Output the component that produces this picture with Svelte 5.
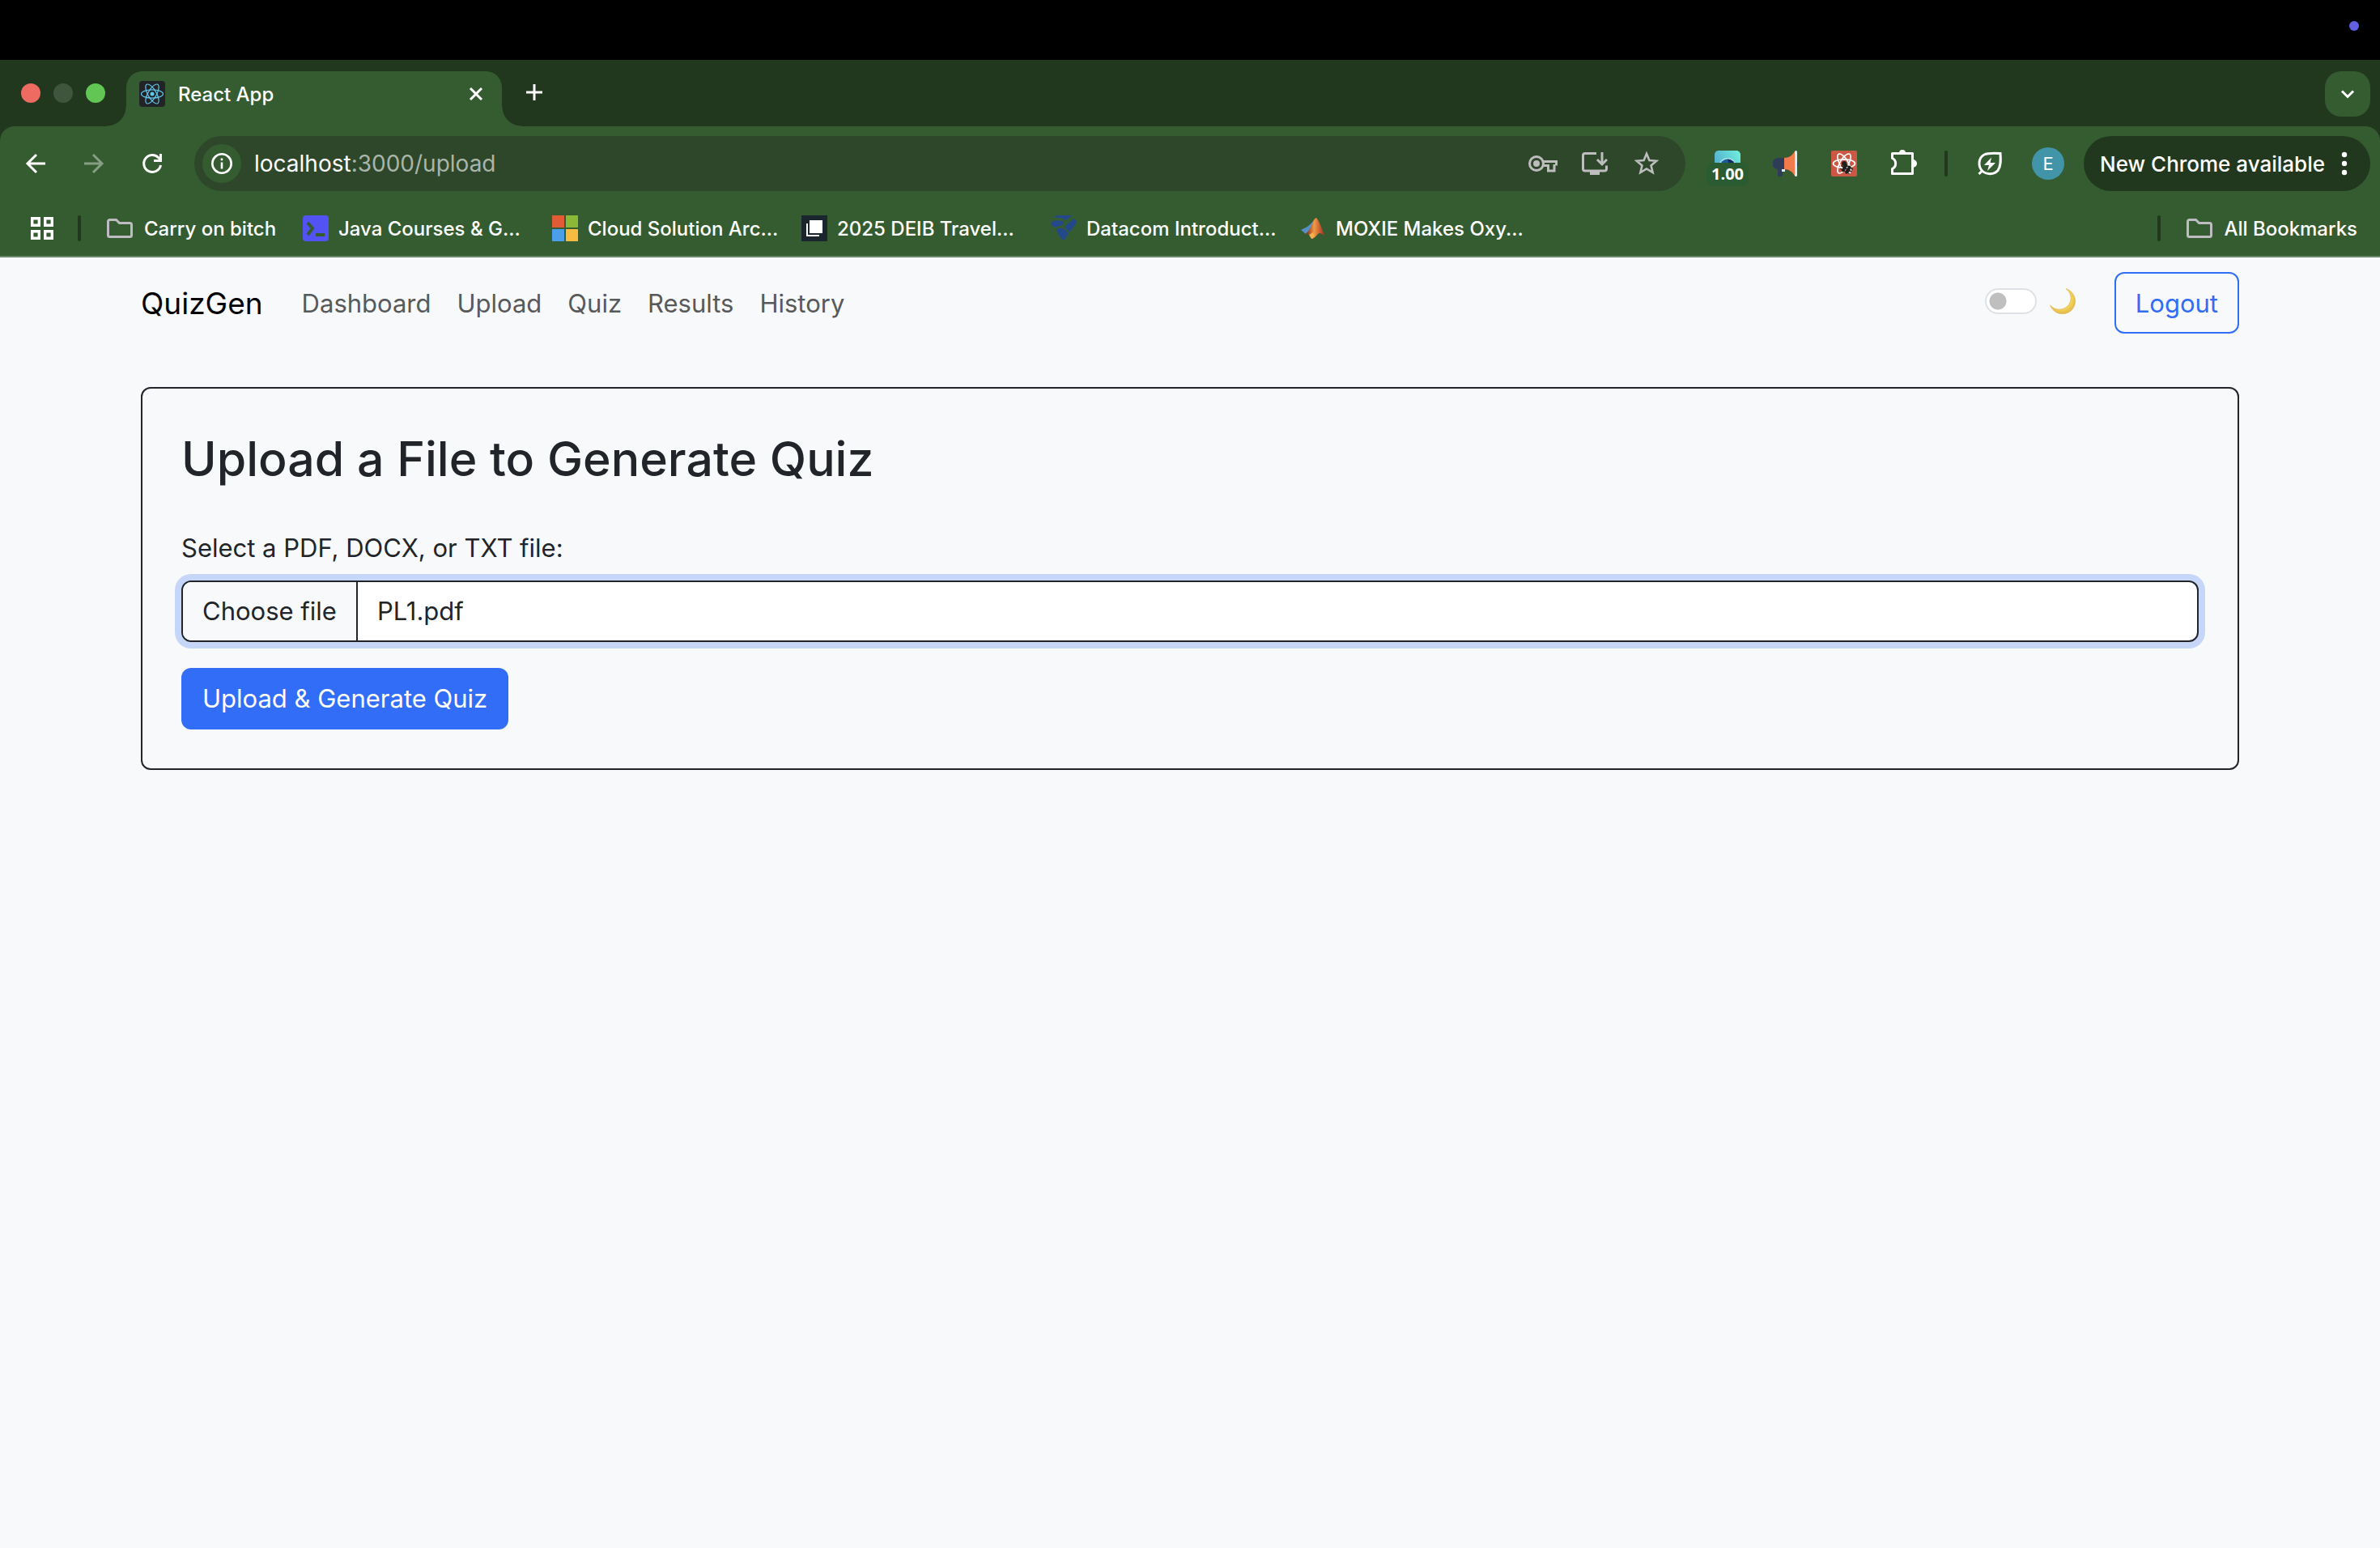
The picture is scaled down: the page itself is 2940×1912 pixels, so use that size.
<script>
  let url = { host: 'localhost', rest: ':3000/upload' };
  let fileName = 'PL1.pdf';
  let dark = false;

  const navLinks = ['Dashboard', 'Upload', 'Quiz', 'Results', 'History'];
  const bookmarks = [
    { icon: 'java', text: 'Java Courses & G...' },
    { icon: 'ms', text: 'Cloud Solution Arc...' },
    { icon: 'deib', text: '2025 DEIB Travel...' },
    { icon: 'datacom', text: 'Datacom Introduct...' },
    { icon: 'moxie', text: 'MOXIE Makes Oxy...' }
  ];

  function pickFile(event) {
    const file = event.currentTarget.files[0];
    if (file) fileName = file.name;
  }
</script>

<div class="screen">
  <div class="menubar"><span class="indicator"></span></div>

  <header class="chrome">
    <div class="tabstrip">
      <div class="lights">
        <span class="light red"></span>
        <span class="light dim"></span>
        <span class="light green"></span>
      </div>
      <div class="tab">
        <svg width="32" height="32" viewBox="0 0 32 32">
          <rect width="32" height="32" rx="4" fill="#222326" />
          <g fill="none" stroke="#61c7ea" stroke-width="1.2">
            <ellipse cx="16" cy="16" rx="13.5" ry="5.2" />
            <ellipse cx="16" cy="16" rx="13.5" ry="5.2" transform="rotate(60 16 16)" />
            <ellipse cx="16" cy="16" rx="13.5" ry="5.2" transform="rotate(120 16 16)" />
          </g>
          <circle cx="16" cy="16" r="2.5" fill="#61c7ea" />
        </svg>
        <span class="tab-title">React App</span>
        <button class="tab-close" aria-label="Close tab">
          <svg width="32" height="32" viewBox="0 0 32 32" fill="none" stroke="#fff" stroke-width="3"><path d="M9 9L23 23M23 9L9 23" /></svg>
        </button>
      </div>
      <button class="icon-btn new-tab" aria-label="New tab">
        <svg width="32" height="32" viewBox="0 0 32 32" fill="none" stroke="#fff" stroke-width="3"><path d="M16 4V24M6 14H26" /></svg>
      </button>
      <button class="icon-btn tab-search" aria-label="Search tabs">
        <svg width="32" height="32" viewBox="0 0 32 32" fill="none" stroke="#fff" stroke-width="3"><path d="M9 12.500L16 19.500L23 12.500" /></svg>
      </button>
    </div>

    <div class="toolbar">
      <div class="group">
        <button class="icon-btn" aria-label="Back">
          <svg width="32" height="32" viewBox="0 0 32 32" fill="none" stroke="#fff" stroke-width="3"><path d="M28 16H6M17 5L6 16L17 27" /></svg>
        </button>
        <button class="icon-btn" aria-label="Forward" disabled>
          <svg width="32" height="32" viewBox="0 0 32 32" fill="none" stroke="#869e83" stroke-width="3"><path d="M4 16H26M15 5L26 16L15 27" /></svg>
        </button>
        <button class="icon-btn" aria-label="Reload">
          <svg width="32" height="32" viewBox="0 0 32 32" fill="none" stroke="#fff" stroke-width="3"><path d="M26.500 18A10.500 10.500 0 1 1 24 9L26.500 11.500M26.500 4V12.500H18" /></svg>
        </button>
      </div>

      <div class="omnibox">
        <button class="site-info" aria-label="View site information">
          <svg width="28" height="28" viewBox="0 0 28 28" fill="none" stroke="#fff" stroke-width="2.600"><circle cx="14" cy="14" r="11.700" /><path d="M14 12.500V20.500M14 7.500V10.200" /></svg>
        </button>
        <div class="url">{url.host}<span>{url.rest}</span></div>
        <button class="omni-btn" aria-label="Passwords">
          <svg width="36" height="32" viewBox="0 0 36 32" fill="none" stroke="#bcbdbc" stroke-width="3"><path d="M18.500 13.500H34.500V18.500M18.500 18.500H24.500V25H32V17" /><circle cx="10" cy="16" r="8.500" /><circle cx="10" cy="16" r="4" fill="#bcbdbc" stroke="none" /></svg>
        </button>
        <button class="omni-btn" aria-label="Install app">
          <svg width="32" height="32" viewBox="0 0 32 32" fill="none" stroke="#bcbdbc" stroke-width="3"><path d="M18 3.500H4a2.500 2.500 0 0 0-2.500 2.500V22.500a2.500 2.500 0 0 0 2.500 2.500H28a2.500 2.500 0 0 0 2.500-2.500V18.500M25 2V16M19 11L25 17L31 11" /><path d="M10 25H22V30H10Z" fill="#bcbdbc" stroke="none" /></svg>
        </button>
        <button class="omni-btn" aria-label="Bookmark this page">
          <svg width="32" height="32" viewBox="0 0 32 32" fill="none" stroke="#bcbdbc" stroke-width="2.600"><path d="M16 3.800L19.400 12L28.200 12.700L21.500 18.400L23.600 27L16 22.400L8.400 27L10.500 18.400L3.800 12.700L12.600 12Z" /></svg>
        </button>
      </div>

      <div class="group">
        <button class="icon-btn speed" aria-label="Video speed">
          <svg width="32" height="32" viewBox="0 0 32 32">
            <defs><linearGradient id="sky" x1="0" y1="0.500" x2="1" y2="0"><stop offset="0" stop-color="#55aed0" /><stop offset="1" stop-color="#6ff0dc" /></linearGradient></defs>
            <rect width="32" height="32" rx="5" fill="url(#sky)" />
            <circle cx="16" cy="20" r="11" fill="#a5e3e8" /><circle cx="16" cy="20" r="9.500" fill="#1d5b9c" /><path d="M16 10.500a9.500 9.500 0 0 1 9.500 9.500h-7z" fill="#162b62" />
          </svg>
          <span class="badge">1.00</span>
        </button>
        <button class="icon-btn" aria-label="Volume booster">
          <svg width="32" height="32" viewBox="0 0 32 32">
            <path d="M14 9H7a7 7 0 0 0-1 14v7a2 2 0 0 0 2 2h2a2 2 0 0 0 2-2v-7h2z" fill="#2d3c58" />
            <path d="M29 14a2.500 2.500 0 0 1 0 5z" fill="#2d3c58" />
            <rect x="11" y="23" width="4" height="3" fill="#e4eaf6" />
            <path d="M14 9C20 9 24 6 27 1V31C24 26 20 23 14 23Z" fill="#f27a4b" />
            <rect x="27" width="3" height="32" rx="1.500" fill="#dfe8f6" />
          </svg>
        </button>
        <button class="icon-btn" aria-label="React Developer Tools">
          <svg width="32" height="32" viewBox="0 0 32 32">
            <rect width="32" height="32" rx="2" fill="#cb5745" />
            <g fill="none" stroke="#fff" stroke-width="1.700">
              <ellipse cx="16" cy="16" rx="13.500" ry="5.200" />
              <ellipse cx="16" cy="16" rx="13.500" ry="5.200" transform="rotate(60 16 16)" />
              <ellipse cx="16" cy="16" rx="13.500" ry="5.200" transform="rotate(120 16 16)" />
            </g>
            <circle cx="16" cy="16" r="3" fill="#20201f" />
            <g transform="rotate(30 19 22)" fill="#20201f"><rect x="14.500" y="17" width="4" height="11" rx="2" /><rect x="19.500" y="17" width="4" height="11" rx="2" /><path d="M11.500 19H26.500M11.500 22.500H26.500M12.500 26H25.500" stroke="#20201f" stroke-width="1.300" /></g>
          </svg>
        </button>
        <button class="icon-btn" aria-label="Extensions">
          <svg width="36" height="36" viewBox="0 0 36 36" fill="none" stroke="#fff" stroke-width="3" stroke-linejoin="round"><path d="M5.500 5.500H30.500V30.500H5.500V24.500C11 22 11 14 5.500 11.500Z" /><path d="M14 5a4 4 0 0 1 8 0zM31 13a5 5 0 0 1 0 10z" fill="#fff" stroke="none" /></svg>
        </button>
      </div>
      <span class="divider tool-divider"></span>
      <div class="group">
        <button class="icon-btn" aria-label="Energy saver">
          <svg width="32" height="32" viewBox="0 0 32 32" fill="none" stroke="#fff" stroke-width="3"><path d="M2.500 29L6.500 25C1 19 2 9 9 5C14 2.500 21 3 29 3.500C29.500 11 30 19 26 24.500C21 30 12 30 6.500 25" /><path d="M18 8.500L9 18H15L13 25L23 15H16.500Z" fill="#fff" stroke="none" /></svg>
        </button>
        <button class="icon-btn" aria-label="Profile"><span class="avatar">E</span></button>
        <button class="update">
          <span>New Chrome available</span>
          <svg width="16" height="32" viewBox="0 0 16 32" fill="#fff"><circle cx="8" cy="5" r="3.200" /><circle cx="8" cy="16" r="3.200" /><circle cx="8" cy="27" r="3.200" /></svg>
        </button>
      </div>
    </div>

    <nav class="bookmarks" aria-label="Bookmarks">
      <button class="apps" aria-label="Tab groups">
        <svg width="28" height="28" viewBox="0 0 28 28" fill="none" stroke="#fff" stroke-width="3.400"><path d="M1.700 1.700h8.600v8.600h-8.600zM17.700 1.700h8.600v8.600h-8.600zM1.700 17.700h8.600v8.600h-8.600zM17.700 17.700h8.600v8.600h-8.600z" /></svg>
      </button>
      <span class="divider"></span>
      <button class="folder first">
        <svg width="32" height="32" viewBox="0 0 32 32" fill="none" stroke="#bdbdc1" stroke-width="3"><path d="M3.500 5.500H11.500L15.500 9.500H28.500a2 2 0 0 1 2 2V24.500a2 2 0 0 1-2 2H3.500a2 2 0 0 1-2-2V7.500a2 2 0 0 1 2-2Z" /></svg>
        <span>Carry on bitch</span>
      </button>
      {#each bookmarks as mark}
        <a class="bookmark" href="#{mark.icon}">
          {#if mark.icon === 'java'}
            <svg width="32" height="32" viewBox="0 0 32 32"><rect width="32" height="32" rx="4" fill="#5353f3" /><path d="M6 9L12 16L6 24" fill="none" stroke="#355c30" stroke-width="4" /><path d="M16 24H27" stroke="#355c30" stroke-width="4" /></svg>
          {:else if mark.icon === 'ms'}
            <svg width="32" height="32" viewBox="0 0 32 32"><path d="M0 0H15V15H0Z" fill="#e15b34" /><path d="M17 0H32V15H17Z" fill="#8bb937" /><path d="M0 17H15V32H0Z" fill="#4b9fe9" /><path d="M17 17H32V32H17Z" fill="#f7bb42" /></svg>
          {:else if mark.icon === 'deib'}
            <svg width="32" height="32" viewBox="0 0 32 32"><rect width="32" height="32" fill="#1b252d" /><rect x="10" y="6" width="16" height="16" fill="#fff" /><path d="M7 10V25H22" fill="none" stroke="#fff" stroke-width="2" /></svg>
          {:else if mark.icon === 'datacom'}
            <svg width="32" height="32" viewBox="0 0 32 32" fill="#24498a"><path d="M4 3L7 0H27L18 6Q12 2 4 3Z" /><path d="M1 8Q5 5 15 7Q18 9 14 12L5 15Q1 13 0 10Z" /><path d="M17 14L28 4Q32 6 32 9L24 20Q21 20 17 14Z" /><path d="M7 17Q14 14 18 18L22 22L17 30H14L9 23Z" /></svg>
          {:else}
            <svg width="32" height="32" viewBox="0 0 32 32">
              <defs><linearGradient id="peak"><stop offset="0" stop-color="#7d2113" /><stop offset="0.450" stop-color="#f09a45" /><stop offset="1" stop-color="#a92e20" /></linearGradient></defs>
              <path d="M1 18L9 14Q14 10 18 5L14 17L7 23Z" fill="#5790c5" />
              <path d="M7 23Q13 17 15 10Q18 3 20 3Q23 5 30 25Q25 20 22 23Q17 29 14 29Q13 22 7 23Z" fill="url(#peak)" />
              <path d="M11 24L16 21L18 26Q15 29 14 29Z" fill="#f2b04a" />
            </svg>
          {/if}
          <span>{mark.text}</span>
        </a>
      {/each}
      <span class="spacer"></span>
      <span class="divider"></span>
      <button class="folder">
        <svg width="32" height="32" viewBox="0 0 32 32" fill="none" stroke="#bdbdc1" stroke-width="3"><path d="M3.500 5.500H11.500L15.500 9.500H28.500a2 2 0 0 1 2 2V24.500a2 2 0 0 1-2 2H3.500a2 2 0 0 1-2-2V7.500a2 2 0 0 1 2-2Z" /></svg>
        <span>All Bookmarks</span>
      </button>
    </nav>
  </header>

  <div class="page">
    <nav class="navbar" aria-label="Main">
      <a class="brand" href="#home">QuizGen</a>
      <div class="links">
        {#each navLinks as link}
          <a href="#{link.toLowerCase()}">{link}</a>
        {/each}
      </div>
      <label class="theme">
        <input type="checkbox" role="switch" aria-label="Dark mode" bind:checked={dark} />
        <svg width="32" height="32" viewBox="0 0 32 32">
          <defs><radialGradient id="moon" cx="0.450" cy="0.400" r="0.600"><stop offset="0" stop-color="#fff08e" /><stop offset="0.700" stop-color="#f3d258" /><stop offset="1" stop-color="#e3b94b" /></radialGradient></defs>
          <path d="M20 0.500C30 4 34 14 30 22.500C25 34 7 36 0.500 21C8 29 19 27 24 19.500C28 13 26 5 20 0.500Z" fill="url(#moon)" stroke="#d9ac49" stroke-width="0.600" />
        </svg>
      </label>
      <button class="logout">Logout</button>
    </nav>

    <main>
      <form class="card" onsubmit={(e) => e.preventDefault()}>
        <h2>Upload a File to Generate Quiz</h2>
        <label class="caption" for="quiz-file">Select a PDF, DOCX, or TXT file:</label>
        <div class="file">
          <span class="file-button">Choose file</span>
          <span class="file-name">{fileName}</span>
          <input id="quiz-file" type="file" accept=".pdf,.docx,.txt" onchange={pickFile} />
        </div>
        <button class="submit" type="submit">Upload &amp; Generate Quiz</button>
      </form>
    </main>
  </div>
</div>

<style>
  :global(body) {
    margin: 0;
    background: #f8f9fb;
  }
  .screen {
    display: flex;
    flex-direction: column;
    min-height: 100vh;
    font-family: Inter, "Liberation Sans", sans-serif;
    color: #212529;
  }
  button {
    font: inherit;
    color: inherit;
    border: 0;
    padding: 0;
    background: none;
    cursor: pointer;
  }
  a {
    color: inherit;
    text-decoration: none;
  }
  svg {
    display: block;
    flex: none;
  }

  .menubar {
    display: flex;
    align-items: center;
    justify-content: flex-end;
    height: 64px;
    padding: 0 26px 10px 0;
    background: #000;
  }
  .indicator {
    width: 12px;
    height: 12px;
    border-radius: 50%;
    background: #6360e2;
  }

  .chrome {
    background: #21381f;
    color: #fff;
    border-bottom: 2px solid #6a8767;
  }
  .tabstrip {
    display: flex;
    height: 68px;
    padding: 14px 12px 0 26px;
  }
  .lights {
    display: flex;
    align-items: center;
    gap: 16px;
    height: 54px;
    margin-right: 26px;
  }
  .light {
    width: 24px;
    height: 24px;
    border-radius: 50%;
  }
  .red { background: #ed6b60; }
  .dim { background: #3f553d; }
  .green { background: #62c655; }
  .tab {
    position: relative;
    display: flex;
    align-items: center;
    gap: 16px;
    box-sizing: border-box;
    width: 464px;
    padding: 0 16px 12px;
    border-radius: 20px 20px 0 0;
    background: #355c30;
    font-size: 24px;
    font-weight: 500;
  }
  .tab::before,
  .tab::after {
    content: "";
    position: absolute;
    bottom: 0;
    width: 24px;
    height: 24px;
  }
  .tab::before {
    right: 100%;
    background: radial-gradient(circle at 0 0, #21381f 23px, #355c30 24px);
  }
  .tab::after {
    left: 100%;
    background: radial-gradient(circle at 100% 0, #21381f 23px, #355c30 24px);
  }
  .tab-title { flex: 1; }
  .icon-btn {
    display: flex;
    align-items: center;
    justify-content: center;
    flex: none;
    width: 56px;
    height: 56px;
  }
  .new-tab { margin-left: 12px; }
  .tab-search {
    margin-left: auto;
    border-radius: 20px;
    background: #355c30;
  }

  .toolbar {
    display: flex;
    align-items: center;
    padding: 12px 12px 12px 16px;
    border-radius: 18px 18px 0 0;
    background: #355c30;
  }
  .group {
    display: flex;
    align-items: center;
    gap: 16px;
  }
  .omnibox {
    display: flex;
    align-items: center;
    gap: 16px;
    flex: 1;
    height: 68px;
    margin: 0 24px;
    padding: 0 24px 0 10px;
    box-sizing: border-box;
    border-radius: 34px;
    background: #2e472b;
  }
  .site-info,
  .omni-btn {
    display: flex;
    align-items: center;
    justify-content: center;
    width: 48px;
    height: 48px;
    border-radius: 50%;
  }
  .site-info { background: #355c30; }
  .url {
    flex: 1;
    font-size: 28px;
  }
  .url span { color: #aab5a9; }
  .speed { position: relative; }
  .badge {
    position: absolute;
    left: 2px;
    top: 27px;
    width: 52px;
    height: 29px;
    border-radius: 8px;
    background: #2b5b30;
    font: 700 20px/28px "Open Sans", sans-serif;
    text-align: center;
  }
  .divider {
    flex: none;
    width: 4px;
    height: 32px;
    border-radius: 2px;
    background: #21381f;
  }
  .tool-divider { margin: 0 24px; }
  .avatar {
    width: 40px;
    height: 40px;
    border-radius: 50%;
    background: #4295a8;
    font-size: 22px;
    line-height: 40px;
  }
  .update {
    display: flex;
    align-items: center;
    justify-content: space-between;
    gap: 16px;
    height: 68px;
    padding: 0 24px 0 20px;
    border-radius: 34px;
    background: #21381f;
    font-size: 26px;
    font-weight: 500;
    white-space: nowrap;
  }

  .bookmarks {
    display: flex;
    align-items: center;
    height: 68px;
    padding: 0 28px 0 38px;
    background: #355c30;
    font-size: 24px;
    font-weight: 500;
    white-space: nowrap;
  }
  .apps { margin-right: 30px; }
  .folder,
  .bookmark {
    display: flex;
    align-items: center;
    gap: 14px;
  }
  .bookmark {
    flex: none;
    gap: 12px;
    width: 308px;
  }
  .folder { margin-left: 32px; }
  .first { width: 242px; }
  .spacer { flex: 1; }

  .page { flex: 1; }
  .navbar,
  main {
    box-sizing: border-box;
    max-width: 2640px;
    margin: 0 auto;
    padding: 0 24px;
  }
  .navbar {
    display: flex;
    align-items: center;
    height: 112px;
    font-size: 31px;
  }
  .brand {
    margin-right: 48px;
    font-size: 37px;
    color: #000;
  }
  .links {
    display: flex;
    flex: 1;
    gap: 32px;
    color: #58595a;
  }
  .theme {
    display: flex;
    align-items: center;
    gap: 16px;
    height: 32px;
    margin: 0 48px 4px 0;
  }
  .theme input {
    appearance: none;
    width: 64px;
    height: 32px;
    margin: 0;
    border: 2px solid #dee2e6;
    border-radius: 16px;
    background: radial-gradient(circle, #bfbfbf 10px, transparent 11px) 0 / 28px 28px no-repeat #fff;
  }
  .theme input:checked { background-position: 32px 0; }
  .logout {
    height: 76px;
    padding: 0 24px;
    border: 2px solid #316df6;
    border-radius: 12px;
    color: #316df6;
  }

  main { margin-top: 48px; }
  .card {
    display: flex;
    flex-direction: column;
    align-items: flex-start;
    padding: 48px;
    border: 2px solid #212529;
    border-radius: 12px;
    font-size: 31px;
    line-height: 48px;
  }
  h2 {
    margin: 0 0 48px;
    font-size: 59px;
    font-weight: 500;
    line-height: 77px;
  }
  .caption { margin-bottom: 16px; }
  .file {
    position: relative;
    display: flex;
    align-self: stretch;
    margin-bottom: 32px;
    border: 2px solid #212529;
    border-radius: 12px;
    background: #fff;
    box-shadow: 0 0 0 8px #c5d6f8;
    overflow: hidden;
  }
  .file-button {
    padding: 12px 24px;
    border-right: 2px solid #212529;
    background: #f8f9fb;
  }
  .file-name { padding: 12px 24px; }
  .file input {
    position: absolute;
    inset: 0;
    width: 100%;
    opacity: 0;
    cursor: pointer;
  }
  .submit {
    height: 76px;
    padding: 0 26px;
    border-radius: 12px;
    background: #316df6;
    color: #fff;
  }
</style>
